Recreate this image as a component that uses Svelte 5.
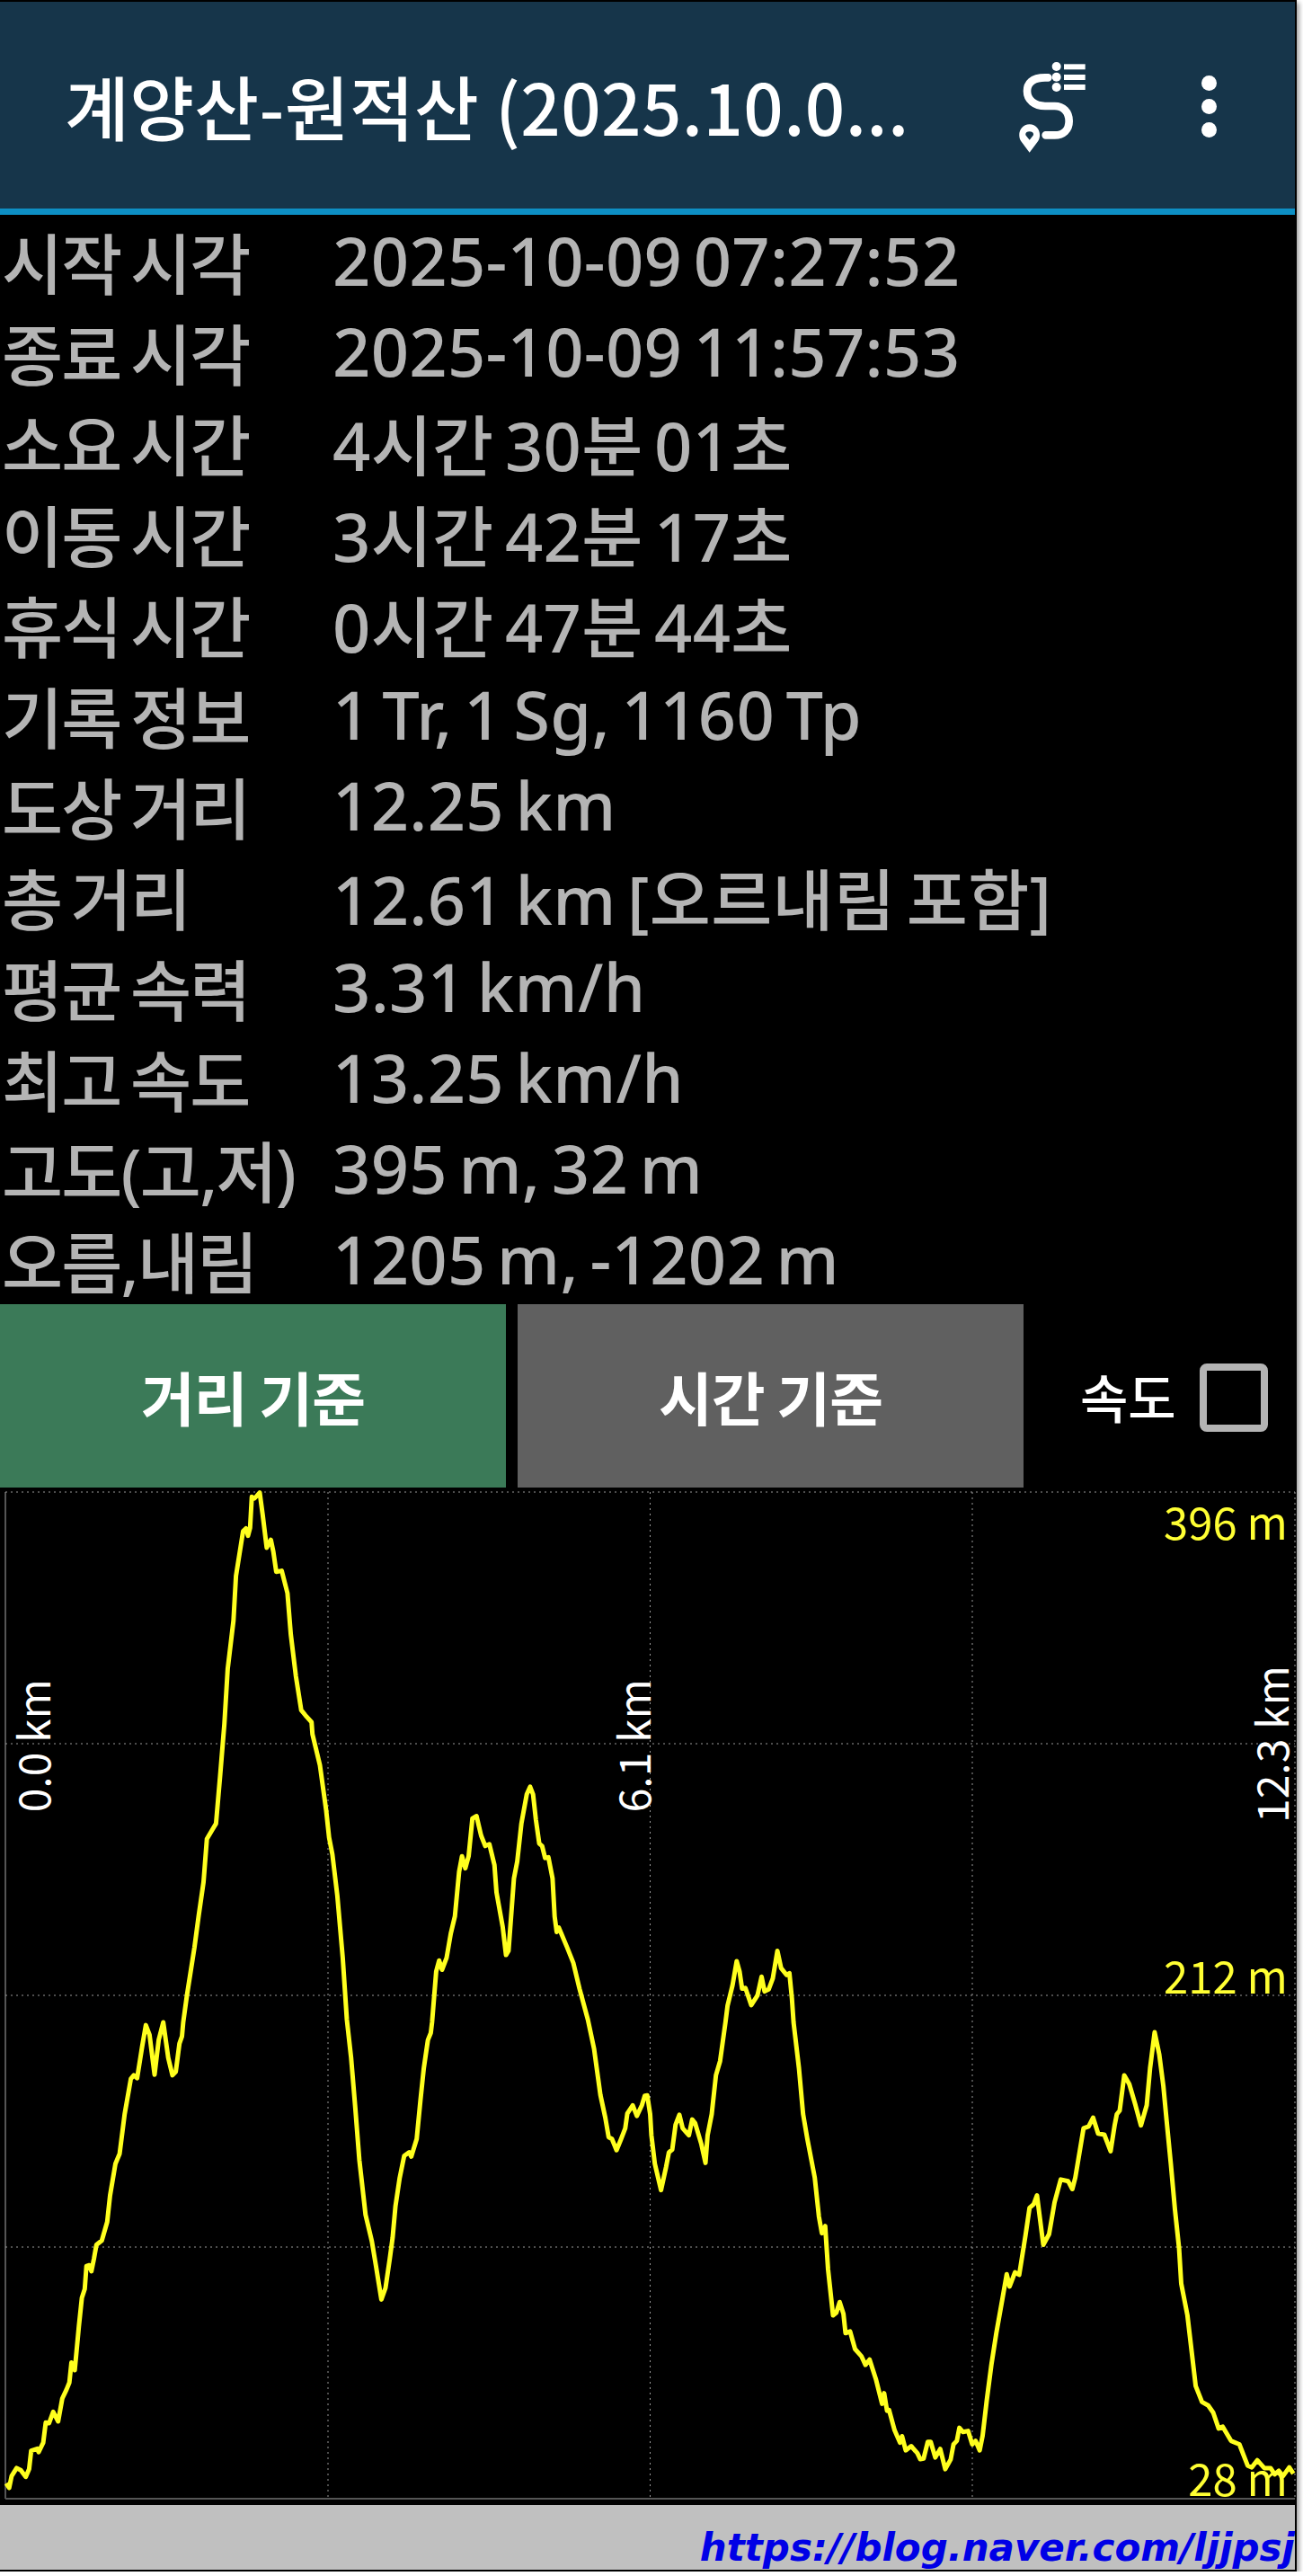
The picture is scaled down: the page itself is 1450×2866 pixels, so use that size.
<script>
  const rows = [
    ["시작 시각", "2025-10-09 07:27:52"],
    ["종료 시각", "2025-10-09 11:57:53"],
    ["소요 시간", "4시간 30분 01초"],
    ["이동 시간", "3시간 42분 17초"],
    ["휴식 시간", "0시간 47분 44초"],
    ["기록 정보", "1 Tr, 1 Sg, 1160 Tp"],
    ["도상 거리", "12.25 km"],
    ["총 거리", "12.61 km [오르내림 포함]"],
    ["평균 속력", "3.31 km/h"],
    ["최고 속도", "13.25 km/h"],
    ["고도(고,저)", "395 m, 32 m"],
    ["오름,내림", "1205 m, -1202 m"],
  ];

  // chart box starts at x=0, y=1655 in page coords
  const chartTop = 1655;
  const gridX = [365, 723.5, 1082, 1441];
  const gridY = [1660, 1940, 2220, 2500];

  // profile traced per crop: [x offset, y offset, x scale, y scale, points]
  const traces = [
    [0, 2250, 2.163, 2.545, [15,1305,22,1318,28,1285,40,1262,50,1268,62,1287,70,1265,75,1213,90,1207,93,1217,104,1190,110,1133,118,1135,128,1103,140,1130,150,1065,160,1040,167,1020,172,963,180,985,190,860,197,780,204,755,208,690,215,688,220,705,226,670,232,630,245,618,258,565,265,490,278,400,288,372,300,260,315,160,322,150,330,158,342,70,351,8,360,35,372,148,382,50,393,0,405,100,415,150,423,140,432,60,438,40,441,0]],
    [0, 1650, 2.163, 2.613, [450,1490,468,1350,478,1260,490,1160,498,1035,510,1010,520,990,530,850,540,700,548,540,562,400,568,270,585,140,592,132,597,153,602,130,606,40,612,45,618,38,625,28,632,90,642,188,652,165,658,200,665,258,678,255,692,320,700,440,712,560,725,660,735,675,750,695,752,730,770,820,785,950,792,1030,800,1080,812,1200,825,1380,835,1560]],
    [0, 2250, 2.163, 2.545, [845,100,855,240,865,390,880,545,895,620,905,690,918,785,928,752,938,670,945,610,952,520,962,440,973,378,985,368,990,380,1003,330,1012,220,1020,130,1030,50,1037,30,1040,0]],
    [0, 1650, 2.163, 2.613, [1050,1420,1057,1388,1064,1415,1075,1380,1085,1310,1095,1260,1105,1130,1112,1085,1120,1120,1128,1085,1137,975,1147,968,1158,1025,1168,1055,1178,1050,1190,1110,1195,1190,1210,1290,1218,1372,1224,1360,1237,1150,1245,1100,1255,990,1268,905,1276,883,1283,905,1290,980,1298,1048,1305,1055,1312,1090,1320,1088,1330,1150,1335,1260,1340,1305,1345,1292,1365,1350,1380,1395,1395,1470,1415,1560]],
    [0, 2250, 2.163, 2.545, [1430,75,1445,205,1457,270,1465,325,1473,330,1484,362,1495,330,1505,300,1510,258,1523,235,1533,265,1545,235,1552,208,1558,207,1565,260,1568,320]],
    [725, 2250, 2.163, 2.545, [8,400,15,435,23,475,35,410,42,368,50,360,58,290,67,262,75,300,90,320,98,275,105,285,120,345,130,398,135,320,145,260,155,150,165,110,178,0]],
    [725, 1650, 2.163, 2.613, [183,1520,195,1460,205,1390,212,1420,218,1470,226,1468,240,1518,255,1490,265,1435,272,1478,282,1472,292,1440,303,1360,312,1410,325,1430,332,1425,338,1500,342,1568]],
    [725, 2250, 2.163, 2.545, [355,130,365,260,375,330,393,440,403,550,410,597,418,577,425,700,437,830,445,822,453,792,462,825,467,880,478,875,490,925,505,945,515,970,525,955,540,1010,555,1080,560,1050,567,1100,572,1098,585,1155,598,1190,603,1172,612,1212,625,1200,640,1220,647,1237,655,1235,665,1188,672,1188,683,1232,695,1208,707,1265,720,1238,727,1195,735,1185,741,1148,750,1160,762,1157,772,1195,780,1185,790,1212,797,1170,807,1070,818,970,830,880,845,780,855,713,862,748,875,708,885,715,900,605,910,525,920,515,928,490,943,630,957,600,970,510,985,445,1003,450,1013,472,1020,440,1040,300,1052,295,1063,270,1075,315,1090,318,1105,365,1115,290,1120,260,1127,250,1138,150,1150,175,1165,235,1178,292,1192,235,1200,130,1211,28,1222,90,1232,180,1240,280,1250,400,1260,530,1270,640,1275,740,1290,830,1300,930,1310,1030,1325,1075,1340,1085,1352,1105,1365,1150,1375,1145,1395,1185,1415,1195,1435,1255,1445,1260,1458,1240,1475,1262,1490,1262,1500,1280,1510,1270,1520,1285,1535,1260,1545,1278]],
  ];

  const profile = traces
    .flatMap(([ox, oy, sx, sy, p]) => {
      const out = [];
      for (let i = 0; i < p.length; i += 2) {
        out.push((ox + p[i] / sx).toFixed(1) + "," + (oy + p[i + 1] / sy - chartTop).toFixed(1));
      }
      return out;
    })
    .join(" ");
</script>

<div class="page">
  <header class="appbar">
    <span class="title">계양산-원적산 (2025.10.0...</span>
    <svg class="route-icon" width="80" height="110" viewBox="250 150 240 330">
      <path d="M350 205 H340 C295 205 280 225 280 250 C280 280 305 300 340 300 H372 C400 300 420 320 420 350 C420 380 400 397 372 397 H342" fill="none" stroke="#fff" stroke-width="26" stroke-linecap="round" />
      <circle cx="378" cy="168" r="15" fill="#fff" />
      <circle cx="378" cy="203" r="15" fill="#fff" />
      <circle cx="378" cy="237" r="15" fill="#fff" />
      <rect x="403" y="160" width="71" height="18" fill="#fff" />
      <rect x="403" y="195" width="71" height="18" fill="#fff" />
      <rect x="403" y="228" width="71" height="18" fill="#fff" />
      <path fill-rule="evenodd" fill="#fff" d="M288 455 L260 418 C245 395 258 361 288 361 C318 361 331 395 316 418 Z M288 413 L276 398 C272 390 279 385 288 385 C297 385 304 390 300 398 Z" />
    </svg>
    <div class="menu-icon">
      <span></span><span></span><span></span>
    </div>
  </header>

  <div class="stats">
    {#each rows as row}
      <div class="row">
        <span class="label">{row[0]}</span>
        <span class="value">{row[1]}</span>
      </div>
    {/each}
  </div>

  <div class="controls">
    <button class="tab active">거리 기준</button>
    <button class="tab">시간 기준</button>
    <div class="speed">
      <span>속도</span>
      <div class="checkbox"></div>
    </div>
  </div>

  <div class="chart">
    <svg width="1450" height="1130" class="plot">
      <line class="axis" x1="6" y1="5" x2="6" y2="1125" />
      <line class="axis" x1="6" y1="1125" x2="1441" y2="1125" />
      {#each gridX as x}
        <line class="grid" x1={x} y1="5" x2={x} y2="1125" />
      {/each}
      {#each gridY as y}
        <line class="grid" x1="6" y1={y - chartTop} x2="1441" y2={y - chartTop} />
      {/each}
      <polyline class="line" points={profile} />
    </svg>
    <span class="alt" style="top: 7px">396 m</span>
    <span class="alt" style="top: 512px">212 m</span>
    <span class="alt" style="top: 1071px">28 m</span>
    <span class="dist" style="left: 11px; top: 213px">0.0 km</span>
    <span class="dist" style="left: 679px; top: 213px">6.1 km</span>
    <span class="dist" style="left: 1389px; top: 198px">12.3 km</span>
  </div>

  <footer class="bottom">
    <span class="url">https://blog.naver.com/ljjpsj</span>
  </footer>
</div>

<style>
  :global(body) {
    margin: 0;
    background: #fff;
  }

  .page {
    width: 1441px;
    height: 2857px;
    background: #000;
    border: solid #000;
    border-width: 2px 2px 2px 0;
    display: flex;
    flex-direction: column;
    font-family: "Noto Sans CJK KR", "Noto Sans", sans-serif;
    box-shadow: 3px 3px 5px rgba(0, 0, 0, 0.35);
  }

  .appbar {
    height: 230px;
    box-sizing: border-box;
    flex: none;
    background: #16354a;
    display: flex;
    align-items: center;
    padding-left: 72px;
    color: #fff;
  }

  .title {
    width: 1061px;
    font-size: 78px;
    font-weight: 500;
    letter-spacing: 0.4px;
    white-space: nowrap;
  }

  .route-icon {
    margin-top: 12px;
  }

  .menu-icon {
    margin-left: 124px;
    margin-top: 2px;
    display: flex;
    flex-direction: column;
    gap: 9px;
  }
  .menu-icon span {
    width: 17px;
    height: 17px;
    border-radius: 50%;
    background: #fff;
  }

  .stats {
    flex: none;
    border-top: 7px solid #0d8fc4;
  }

  .row {
    height: 101px;
    display: flex;
    align-items: center;
    color: #b4b4b4;
    font-family: "Noto Sans", "Noto Sans CJK KR", sans-serif;
    font-size: 74px;
    font-weight: 500;
    word-spacing: -7px;
    white-space: nowrap;
  }

  .label {
    width: 370px;
    flex: none;
    padding-left: 2px;
    box-sizing: border-box;
    letter-spacing: -1.8px;
  }

  .value {
    letter-spacing: 0.3px;
  }

  .controls {
    flex: none;
    height: 204px;
    display: flex;
    align-items: stretch;
  }

  .tab {
    width: 563px;
    border: 0;
    padding: 0;
    margin: 0 13px 0 0;
    background: #606060;
    color: #fff;
    font: 700 65px "Noto Sans CJK KR", sans-serif;
    letter-spacing: -1px;
  }
  .tab.active {
    background: #3b7a58;
  }

  .speed {
    display: flex;
    align-items: center;
    margin-left: 50px;
    gap: 26px;
    color: #fff;
    font-size: 58px;
    font-weight: 500;
  }

  .checkbox {
    width: 76px;
    height: 76px;
    box-sizing: border-box;
    border: 8px solid #b4b4b4;
    border-radius: 8px;
    margin-top: 4px;
  }

  .chart {
    position: relative;
    flex: 1;
  }

  .plot {
    position: absolute;
    left: 0;
    top: 0;
  }

  .axis {
    stroke: #555;
    stroke-width: 2;
  }

  .grid {
    stroke: #999;
    stroke-width: 1;
    stroke-dasharray: 2 4;
  }

  .line {
    fill: none;
    stroke: #ffff1e;
    stroke-width: 5;
    stroke-linejoin: round;
  }

  .alt {
    position: absolute;
    right: 8px;
    color: #ffff33;
    font-size: 49px;
    line-height: 60px;
  }

  .dist {
    position: absolute;
    color: #fff;
    font-size: 48px;
    line-height: 48px;
    writing-mode: vertical-rl;
    transform: rotate(180deg);
    white-space: nowrap;
  }

  .bottom {
    flex: none;
    height: 72px;
    box-sizing: border-box;
    padding-top: 22px;
    background: #c0c0c0;
    display: flex;
    align-items: center;
    justify-content: flex-end;
    overflow: hidden;
  }

  .url {
    color: #0000e6;
    font: italic 700 42px "DejaVu Sans", sans-serif;
    white-space: nowrap;
  }
</style>
